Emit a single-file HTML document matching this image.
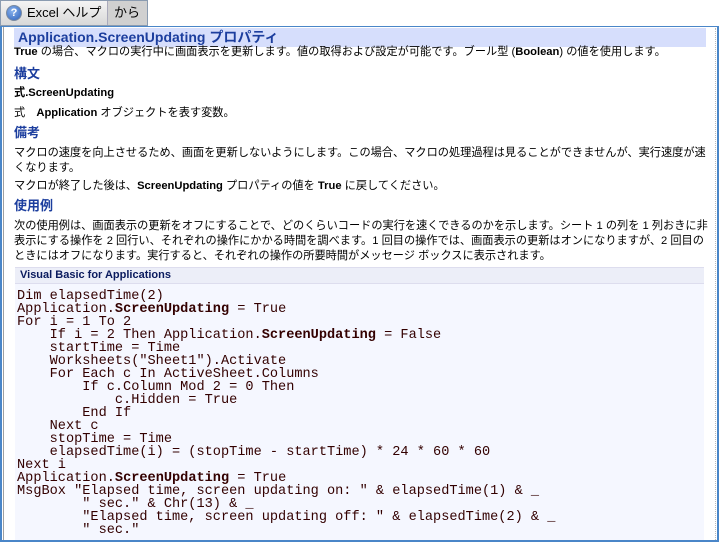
<!DOCTYPE html>
<html><head><meta charset="utf-8"><style>
*{margin:0;padding:0;box-sizing:border-box}
body{width:719px;height:542px;overflow:hidden;background:#fff;font-family:"Liberation Sans","Noto Sans CJK JP",sans-serif;font-size:11.2px;color:#000;position:relative}
.tab{position:absolute;left:0;top:0;height:26px;display:flex;border:1px solid #8a9bb0;background:linear-gradient(#f4f4f4,#d8d8d8);white-space:nowrap}
.tab div{height:24px;line-height:24px;font-size:13px;padding:0 6px}
.tab .a{display:flex;align-items:center;border-right:1px solid #aab;padding-left:5px;width:107px}
.tab .b{background:#d0d0d0;width:39px}
.ic{width:16px;height:16px;border-radius:50%;background:radial-gradient(circle at 40% 35%,#8ab4ee,#2b5fb8);color:#fff;font-size:11px;font-weight:bold;text-align:center;line-height:15px;margin-right:5px;border:1px solid #7a8aa0;flex:none}
.frame{position:absolute;left:0;top:26px;width:719px;height:516px;border:2px solid #4a86c8;border-top-width:1px}
.lline{position:absolute;left:3px;top:27px;width:1px;height:513px;background:#a0a0a0}
.rline{position:absolute;left:715px;top:28px;width:1px;height:512px;border-left:1px dotted #bbb}
.t{position:absolute;left:14px;white-space:nowrap;line-height:15px}
.title{position:absolute;left:14px;top:28px;width:692px;height:19px;background:#d6defc;color:#1c3e9e;font-weight:bold;font-size:14px;line-height:18px;padding-left:4px}
h3{position:absolute;left:14px;color:#1c3e9e;font-size:13px;font-weight:bold;line-height:16px}
.code{position:absolute;left:15px;top:267px;width:689px;height:273px;background:#f5f7ff}
.ch{height:17px;background:#eceef8;border-top:1px solid #dde;border-bottom:1px solid #dde;color:#0a1a5e;font-weight:bold;font-size:11px;line-height:15px;padding-left:5px}
pre{font-family:"Liberation Mono",monospace;font-size:13.6px;line-height:13px;color:#300;padding:6px 0 0 2px}
</style></head><body>
<div class="tab"><div class="a"><span class="ic">?</span>Excel ヘルプ</div><div class="b">から</div></div>
<div class="frame"></div><div class="lline"></div><div class="rline"></div>
<div class="title">Application.ScreenUpdating プロパティ</div>
<div class="t" style="top:45px"><b>True</b> の場合、マクロの実行中に画面表示を更新します。値の取得および設定が可能です。ブール型 (<b>Boolean</b>) の値を使用します。</div>
<h3 style="top:66px">構文</h3>
<div class="t" style="top:86px"><b>式.ScreenUpdating</b></div>
<div class="t" style="top:106px">式　<b>Application</b> オブジェクトを表す変数。</div>
<h3 style="top:125px">備考</h3>
<div class="t" style="top:146px">マクロの速度を向上させるため、画面を更新しないようにします。この場合、マクロの処理過程は見ることができませんが、実行速度が速<br>くなります。</div>
<div class="t" style="top:179px">マクロが終了した後は、<b>ScreenUpdating</b> プロパティの値を <b>True</b> に戻してください。</div>
<h3 style="top:198px">使用例</h3>
<div class="t" style="top:219px">次の使用例は、画面表示の更新をオフにすることで、どのくらいコードの実行を速くできるのかを示します。シート 1 の列を 1 列おきに非<br>表示にする操作を 2 回行い、それぞれの操作にかかる時間を調べます。1 回目の操作では、画面表示の更新はオンになりますが、2 回目の<br>ときにはオフになります。実行すると、それぞれの操作の所要時間がメッセージ ボックスに表示されます。</div>
<div class="code"><div class="ch">Visual Basic for Applications</div>
<pre>Dim elapsedTime(2)
Application.<b>ScreenUpdating</b> = True
For i = 1 To 2
    If i = 2 Then Application.<b>ScreenUpdating</b> = False
    startTime = Time
    Worksheets("Sheet1").Activate
    For Each c In ActiveSheet.Columns
        If c.Column Mod 2 = 0 Then
            c.Hidden = True
        End If
    Next c
    stopTime = Time
    elapsedTime(i) = (stopTime - startTime) * 24 * 60 * 60
Next i
Application.<b>ScreenUpdating</b> = True
MsgBox "Elapsed time, screen updating on: " &amp; elapsedTime(1) &amp; _
        " sec." &amp; Chr(13) &amp; _
        "Elapsed time, screen updating off: " &amp; elapsedTime(2) &amp; _
        " sec."</pre></div>
</body></html>
